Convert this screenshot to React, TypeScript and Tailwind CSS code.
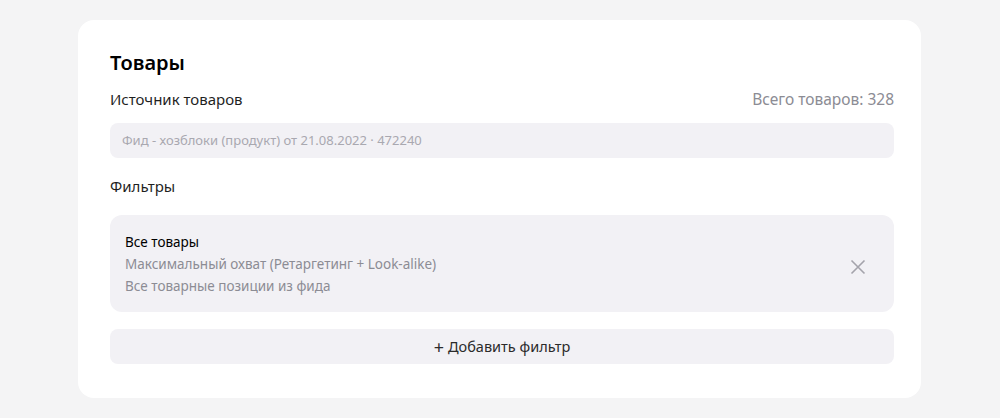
import React from "react";

export default function App() {
  return (
    <div
      className="min-h-[418px] w-full bg-[#f4f4f5] pt-5"
      style={{ fontFamily: '"Noto Sans", "Open Sans", Arial, sans-serif' }}
    >
      <div className="ml-[78px] w-[843px] rounded-2xl bg-white pl-8 pr-[27px] pt-[31px] pb-[34px]">
        <h2 className="text-[20px] font-semibold leading-6 text-black">Товары</h2>

        <div className="mt-[14px] flex items-center justify-between">
          <span className="text-[15px] leading-5 text-[#1f1f1f]">Источник товаров</span>
          <span className="text-[15.5px] leading-5 text-[#8c8c94]">Всего товаров: 328</span>
        </div>

        <div className="mt-[14px] flex h-[35px] items-center rounded-lg bg-[#f2f1f5] px-3 text-[13px] text-[#a9a8b0]">
          Фид - хозблоки (продукт) от 21.08.2022 · 472240
        </div>

        <div className="mt-[18px] text-[15px] leading-5 text-[#1f1f1f]">Фильтры</div>

        <div className="mt-[19px] flex h-[97px] items-center justify-between rounded-xl bg-[#f2f1f5] pl-[15px] pr-[28px]">
          <div className="flex flex-col text-[13.5px] leading-[22px]">
            <span className="text-black">Все товары</span>
            <span className="text-[#8c8c94]">Максимальный охват (Ретаргетинг + Look-alike)</span>
            <span className="text-[#8c8c94]">Все товарные позиции из фида</span>
          </div>
          <button className="mt-[6px] text-[#a4a3ab]" aria-label="Удалить">
            <svg width="16" height="16" viewBox="0 0 16 16" fill="none">
              <path d="M1.5 1.5l13 13M14.5 1.5l-13 13" stroke="currentColor" strokeWidth="1.6" />
            </svg>
          </button>
        </div>

        <button className="mt-[17px] flex h-[35px] w-full items-center justify-center gap-1 rounded-lg bg-[#f2f1f5] text-[14.5px] text-[#2b2b2b]">
          <span className="text-[18px] leading-none">+</span>
          Добавить фильтр
        </button>
      </div>
    </div>
  );
}
